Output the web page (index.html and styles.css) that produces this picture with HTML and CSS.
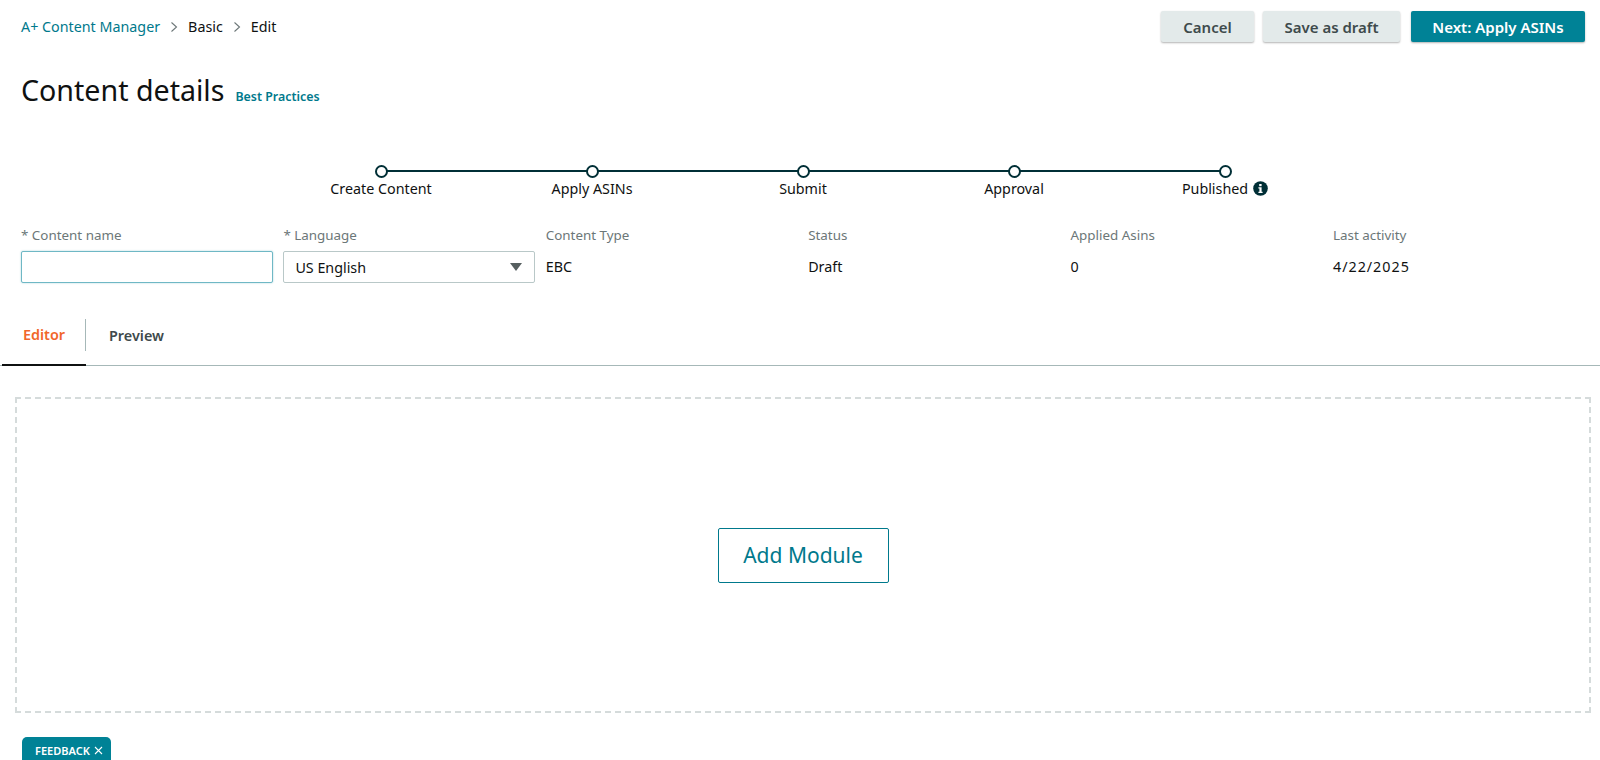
FILE: index.html
```html
<!DOCTYPE html>
<html lang="en">
<head>
<meta charset="utf-8">
<title>Content details</title>
<link rel="stylesheet" href="styles.css">
</head>
<body>
<header class="topbar">
  <nav class="crumbs">
    <a class="crumb-link">A+ Content Manager</a>
    <svg class="chev" width="8" height="12" viewBox="0 0 8 12"><path d="M1.5 1.5 6.5 6l-5 4.5" fill="none" stroke="#6c7778" stroke-width="1.1"/></svg>
    <span>Basic</span>
    <svg class="chev" width="8" height="12" viewBox="0 0 8 12"><path d="M1.5 1.5 6.5 6l-5 4.5" fill="none" stroke="#6c7778" stroke-width="1.1"/></svg>
    <span>Edit</span>
  </nav>
  <div class="actions">
    <button class="btn btn-cancel">Cancel</button>
    <button class="btn btn-draft">Save as draft</button>
    <button class="btn btn-primary">Next: Apply ASINs</button>
  </div>
</header>
<div class="title-row">
  <h1>Content details</h1>
  <a class="best">Best Practices</a>
</div>
<ol class="stepper">
  <li class="step"><span class="dot"></span><span>Create Content</span></li>
  <li class="step"><span class="dot"></span><span>Apply ASINs</span></li>
  <li class="step"><span class="dot"></span><span>Submit</span></li>
  <li class="step"><span class="dot"></span><span>Approval</span></li>
  <li class="step step-last"><span class="dot"></span><span class="pub">Published
    <svg class="info" width="15" height="15" viewBox="0 0 15 15"><circle cx="7.5" cy="7.5" r="7.3" fill="#002f36"/><rect x="6.2" y="3" width="2.4" height="2.2" fill="#fff"/><path d="M5.4 6.2h3.2v4.5h1v1.2H5.4v-1.2h1V7.4h-1z" fill="#fff"/></svg></span></li>
</ol>
<section class="fields">
  <div class="field">
    <label class="flabel">* Content name</label>
    <input class="input" type="text">
  </div>
  <div class="field">
    <label class="flabel">* Language</label>
    <div class="select"><span>US English</span><svg width="12" height="8" viewBox="0 0 12 8"><path d="M0 0h12L6 8z" fill="#565f60"/></svg></div>
  </div>
  <div class="field"><span class="flabel">Content Type</span><span class="fvalue">EBC</span></div>
  <div class="field"><span class="flabel">Status</span><span class="fvalue">Draft</span></div>
  <div class="field"><span class="flabel">Applied Asins</span><span class="fvalue">0</span></div>
  <div class="field"><span class="flabel">Last activity</span><span class="fvalue fdate">4/22/2025</span></div>
</section>
<div class="tabs">
  <div class="tab tab-active"><span>Editor</span></div>
  <div class="tab tab-other"><span>Preview</span></div>
</div>
<main class="dropzone">
  <button class="add">Add Module</button>
</main>
<div class="feedback">FEEDBACK
  <svg width="9" height="9" viewBox="0 0 9 9"><path d="M1 1l7 7M8 1 1 8" stroke="#fff" stroke-width="1.1" fill="none"/></svg>
</div>
</body>
</html>
```
FILE: styles.css
```css
* { box-sizing: border-box; }
html, body { margin: 0; height: 760px; overflow: hidden; }
body { background: #fff; color: #0f1111; font-family: "Noto Sans", "Liberation Sans", sans-serif; font-size: 14px; }

.topbar { display: flex; justify-content: space-between; align-items: center; padding: 11px 15px 0 21px; height: 42px; }
.crumbs { display: flex; align-items: center; font-size: 14.3px; gap: 9px; color: #0f1111; }
.crumb-link { color: #00798c; }
.chev { margin: 0 1px; }
.actions { display: flex; gap: 9px; }
.btn { height: 31px; border: 0; border-radius: 2px; font: 600 15px "Noto Sans", sans-serif; box-shadow: 0 1px 2px rgba(0,0,0,.3); }
.btn-cancel { width: 93px; background: #e3eaea; color: #3e4a4c; }
.btn-draft { width: 137px; background: #e3eaea; color: #3e4a4c; }
.btn-primary { width: 174px; margin-left: 2px; background: #008296; color: #fff; font-size: 15px; }

.title-row { display: flex; align-items: baseline; gap: 11px; padding: 28px 0 0 21px; height: 93px; }
h1 { margin: 0; font-size: 28.6px; font-weight: 400; line-height: 40px; color: #0f1111; }
.best { color: #00798c; font-size: 12.4px; font-weight: 600; }

.stepper { list-style: none; display: grid; grid-template-columns: repeat(5, 211px); justify-content: center; margin: 0; padding: 30px 0 0 6px; }
.step { position: relative; display: flex; flex-direction: column; align-items: center; gap: 1px; font-size: 14.3px; line-height: 19px; }
.step::after { content: ""; position: absolute; top: 5px; left: 50%; width: 100%; height: 2px; background: #002f36; }
.step-last::after { display: none; }
.dot { position: relative; z-index: 1; width: 13px; height: 13px; border: 2px solid #002f36; border-radius: 50%; background: #fff; }
.pub { display: flex; align-items: center; gap: 5px; }

.fields { display: grid; grid-template-columns: repeat(6, 252px); column-gap: 10.4px; padding: 28px 0 0 21px; }
.field { display: flex; flex-direction: column; }
.flabel { font-size: 13.4px; line-height: 18px; color: #6c7778; margin-bottom: 7px; }
.input { height: 32px; border: 1px solid #6fb8c5; border-radius: 2px; box-shadow: 0 0 2px rgba(0,130,150,.35); background: #fff; outline: 0; }
.select { height: 32px; display: flex; align-items: center; justify-content: space-between; padding: 0 12px 0 11px; border: 1px solid #b9c8c8; border-radius: 2px; font-size: 14.3px; color: #0f1111; }
.fvalue { font-size: 14.3px; line-height: 32px; color: #0f1111; }
.fdate { letter-spacing: 1px; }

.tabs { display: flex; height: 47px; margin-top: 36px; border-bottom: 1px solid #a6b8b8; padding-left: 2px; }
.tab { height: 47px; font-weight: 600; font-size: 14.4px; display: flex; align-items: center; }
.tab-active { width: 84px; padding: 0 0 0 21px; color: #f1662a; border-bottom: 2px solid #0f1111; position: relative; }
.tab-active::after { content: ""; position: absolute; right: 0; top: 0; height: 32px; width: 1px; background: #a6b8b8; }
.tab-active span, .tab-other span { position: relative; top: -7px; }
.tab-other { padding-left: 23px; color: #3e4a4c; }

.dropzone { display: flex; align-items: center; justify-content: center; width: 1576px; height: 316px; margin: 31px 0 0 15px; border: 2px dashed #d5dbdb; }
.add { width: 171px; height: 55px; background: #fff; border: 1px solid #00798c; border-radius: 2px; color: #00798c; font: 400 21px "Noto Sans", sans-serif; }

.feedback { position: fixed; left: 22px; bottom: 0; width: 89px; height: 23px; background: #008296; color: #fff; border-radius: 5px 5px 0 0; font-size: 11px; font-weight: 600; display: flex; align-items: center; gap: 4px; padding: 3px 0 0 13px; }
```
